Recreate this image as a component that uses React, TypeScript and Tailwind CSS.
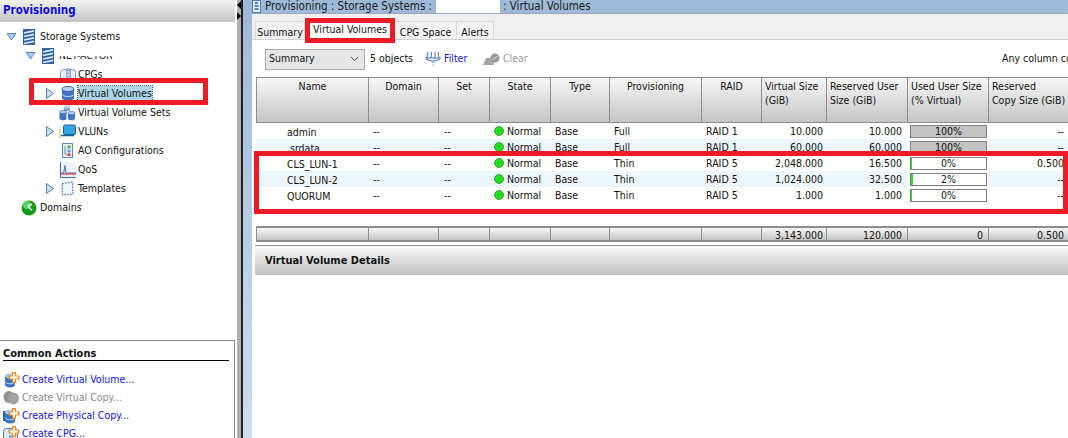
import React from "react";

const Sans = "font-['DejaVu_Sans_Condensed','DejaVu_Sans',sans-serif] [font-stretch:condensed]";

const Expander = ({ open }: { open?: boolean }) => (
  <svg width="13" height="13" viewBox="0 0 13 13" className="shrink-0">
    {open ? (
      <path d="M2 3.500h9L6.500 10z" fill="#a9c9ee" stroke="#5a86bd" />
    ) : (
      <path d="M2.500 1.500v10L9.500 6.500z" fill="#cfe0f5" stroke="#4f7db8" />
    )}
  </svg>
);

const StorageIcon = () => (
  <svg width="12" height="16" viewBox="0 0 12 16" className="shrink-0">
    <rect x="0" y="0" width="12" height="16" fill="#2f62a6" />
    <path d="M1 4 11 1.800M1 7.500 11 5.300M1 11 11 8.800M1 14.500 11 12.300" stroke="#dfeaf7" strokeWidth="1.700" />
  </svg>
);

const VolumeIcon = () => (
  <svg width="14" height="15" viewBox="0 0 14 15" className="shrink-0">
    <path d="M1 3v9c0 1.500 2.700 2.500 6 2.500s6-1 6-2.500V3z" fill="#3f76c4" />
    <ellipse cx="7" cy="3" rx="6" ry="2.500" fill="#b9d4f2" stroke="#2f5f9e" />
    <path d="M1 8c0 1.500 2.700 2.500 6 2.500s6-1 6-2.500" fill="none" stroke="#cfe2f8" />
  </svg>
);

const CpgIcon = () => (
  <svg width="16" height="14" viewBox="0 0 16 14" className="shrink-0">
    <rect x="0.500" y="1.500" width="15" height="12" rx="3" fill="#e6eff9" stroke="#7f9fc8" />
    <rect x="6" y="0.500" width="5" height="13" fill="#8eaad0" />
    <path d="M7 4h3M7 7h3M7 10h3" stroke="#f2f6fb" />
  </svg>
);

const SetsIcon = () => (
  <svg width="17" height="16" viewBox="0 0 17 16" className="shrink-0">
    <path d="M5 1h6v5H5z" fill="#7fa3d6" />
    <ellipse cx="8" cy="1.800" rx="3.500" ry="1.500" fill="#bcd4f0" />
    <path d="M0.500 7v6.500c0 1 1.600 1.800 3.500 1.800s3.500-.8 3.500-1.800V7z" fill="#3f76c4" />
    <ellipse cx="4" cy="7" rx="3.500" ry="1.600" fill="#bcd4f0" stroke="#2f5f9e" strokeWidth=".6" />
    <path d="M9 8v5.500c0 1 1.600 1.800 3.500 1.800s3.500-.8 3.500-1.800V8z" fill="#3f76c4" />
    <ellipse cx="12.500" cy="8" rx="3.500" ry="1.600" fill="#bcd4f0" stroke="#2f5f9e" strokeWidth=".6" />
  </svg>
);

const VlunIcon = () => (
  <svg width="17" height="15" viewBox="0 0 17 15" className="shrink-0">
    <path d="M1 5v10" stroke="#9fce3a" strokeWidth="1.500" strokeDasharray="1.500 1" />
    <rect x="4.500" y="1" width="12" height="9.500" rx="1.500" fill="#35a7e0" stroke="#1d5f95" />
    <path d="M2 11.500h13" stroke="#1d5f95" strokeWidth="1.500" />
  </svg>
);

const AoIcon = () => (
  <svg width="11" height="15" viewBox="0 0 11 15" className="shrink-0">
    <rect x="0.500" y="0.500" width="10" height="14" fill="#e6eff9" stroke="#5f86bb" />
    <rect x="5.500" y="2.500" width="3" height="3" fill="#49b649" />
    <rect x="5.500" y="6.500" width="3" height="3" fill="#6aa0d8" />
    <rect x="5.500" y="10.500" width="3" height="2.500" fill="#d43c3c" />
    <path d="M3 3v8h2" fill="none" stroke="#6a86a8" />
  </svg>
);

const TitleIcon = () => (
  <svg width="9" height="13" viewBox="0 0 9 13" className="shrink-0">
    <rect x="0.500" y="0.500" width="8" height="12" fill="#e6eff9" stroke="#4f7db8" />
    <path d="M3 3h3M2.500 6h4M2.500 9h4" stroke="#2f5f9e" strokeWidth="1.400" />
  </svg>
);

const QosIcon = () => (
  <svg width="16" height="16" viewBox="0 0 16 16" className="shrink-0">
    <rect x="0" y="0" width="16" height="16" fill="#eef3fb" />
    <path d="M0.500 0v15.500H16" fill="none" stroke="#3f6fa8" />
    <path d="M1 11h2.500L5 3.500 6 11h10" fill="#c9d8f2" stroke="#4b78c0" />
    <path d="M1 12h15" stroke="#e03030" strokeWidth="1.200" />
  </svg>
);

const TemplatesIcon = () => (
  <svg width="13" height="15" viewBox="0 0 13 15" className="shrink-0">
    <path d="M1 2.500 11.500 1 12 13 1.500 14z" fill="#eef4fb" stroke="#4b78c0" strokeWidth="1.300" strokeDasharray="1.600 1.400" />
  </svg>
);

const DomainsIcon = () => (
  <svg width="16" height="16" viewBox="0 0 16 16" className="shrink-0">
    <circle cx="8" cy="8" r="7.500" fill="#159a15" />
    <circle cx="6" cy="5" r="4" fill="#5fd45f" />
    <path d="M7 6.500 11 4M7 6.500l4 4" stroke="#eef" strokeWidth="1.500" />
  </svg>
);

const Plus = () => (
  <g>
    <path d="M9 0h4v3.500h3.500v4H13V11H9V7.500H5.500v-4H9z" fill="#f08a1d" />
    <path d="M11 1.500v8M7 5.500h8" stroke="#fff" strokeWidth="1.800" />
  </g>
);

const ActionIcon = ({ kind }: { kind: string }) => (
  <svg width="17" height="16" viewBox="0 0 17 16" className="shrink-0">
    {kind === "gray" ? (
      <g>
        <ellipse cx="6" cy="7" rx="5.500" ry="6" fill="#8f8f8f" />
        <ellipse cx="10.500" cy="8.500" rx="5.500" ry="6" fill="#a3a3a3" />
      </g>
    ) : kind === "cpg" ? (
      <g>
        <rect x="0.500" y="2.500" width="14" height="13" rx="3" fill="#dce9f7" stroke="#4b78c0" />
        <rect x="6" y="9" width="4" height="6" fill="#8eaad0" />
        <Plus />
      </g>
    ) : (
      <g>
        {kind === "copy" && <path d="M0 3h6v10H0z" fill="#2f5f9e" />}
        <path d="M2 4v9c0 1.300 2.200 2.500 5 2.500s5-1.200 5-2.500V4z" fill="#3a74c8" />
        <ellipse cx="7" cy="4" rx="5" ry="2.400" fill="#a9c8ec" />
        <path d="M2 9.500c0 1.300 2.200 2.300 5 2.300s5-1 5-2.300" fill="none" stroke="#bcd6f3" />
        <Plus />
      </g>
    )}
  </svg>
);

const tree = [
  { label: "CPGs", icon: <CpgIcon /> },
  { label: "Virtual Volumes", arrow: true, icon: <VolumeIcon />, selected: true },
  { label: "Virtual Volume Sets", icon: <SetsIcon /> },
  { label: "VLUNs", arrow: true, icon: <VlunIcon /> },
  { label: "AO Configurations", icon: <AoIcon /> },
  { label: "QoS", icon: <QosIcon /> },
  { label: "Templates", arrow: true, icon: <TemplatesIcon /> },
];

const columns = [
  { name: "Name", w: "w-[112px]", pr: "pr-[3px]" },
  { name: "Domain", w: "w-[70px]", pr: "pr-[3px]" },
  { name: "Set", w: "w-[51px]", pr: "pr-[3px]" },
  { name: "State", w: "w-[61px]", pr: "pr-[3px]" },
  { name: "Type", w: "w-[59px]", pr: "pr-[3px]" },
  { name: "Provisioning", w: "w-[92px]", pr: "pr-[3px]" },
  { name: "RAID", w: "w-[60px]", pr: "pr-[3px]" },
  { name: "Virtual Size (GiB)", w: "w-[65px]", pr: "pr-[3px]", left: true },
  { name: "Reserved User Size (GiB)", w: "w-[81px]", pr: "pr-[5px]", left: true },
  { name: "Used User Size (% Virtual)", w: "w-[81px]", pr: "pr-[5px]", left: true },
  { name: "Reserved Copy Size (GiB)", w: "w-[80px]", pr: "pr-[4px]", left: true },
];

const rows = [
  { name: "admin", prov: "Full", raid: "RAID 1", size: "10.000", res: "10.000", used: 100, copy: "--" },
  { name: ".srdata", prov: "Full", raid: "RAID 1", size: "60.000", res: "60.000", used: 100, copy: "--" },
  { name: "CLS_LUN-1", prov: "Thin", raid: "RAID 5", size: "2,048.000", res: "16.500", used: 0, copy: "0.500" },
  { name: "CLS_LUN-2", prov: "Thin", raid: "RAID 5", size: "1,024.000", res: "32.500", used: 2, copy: "--" },
  { name: "QUORUM", prov: "Thin", raid: "RAID 5", size: "1.000", res: "1.000", used: 0, copy: "--" },
];

const UsedBar = ({ used }: { used: number }) => (
  <div className={"relative h-[13px] w-[77px] border border-[#808080] text-center leading-[11px] " + (used === 100 ? "bg-[#c3c3c3]" : "bg-white")}>
    {used === 2 && <div className="absolute left-0 top-0 h-full w-[2px] bg-[#22e022]" />}
    {used === 0 && <div className="absolute left-0 top-0 h-full w-[1px] bg-[#22e022]" />}
    <span className="relative">{used}%</span>
  </div>
);

const App = () => {
  return (
    <div className={Sans + " relative flex h-[438px] w-[1068px] overflow-hidden bg-white text-[10.5px] text-[#111]"}>
      {/* left navigation */}
      <div className="flex w-[235px] shrink-0 flex-col bg-white">
        <div className="flex h-[22px] shrink-0 items-center bg-gradient-to-b from-[#f2f2f2] to-[#c4c4c4] pl-[3px] text-[11.5px] font-bold text-[#0a0ae6]">
          Provisioning
        </div>
        <div className="flex-1 pt-[5px]">
          <div className="flex h-[19px] items-center pl-[5px]">
            <Expander open />
            <div className="ml-[5px]"><StorageIcon /></div>
            <span className="ml-[5px]">Storage Systems</span>
          </div>
          <div className="flex h-[19px] items-center pl-[24px]">
            <Expander open />
            <div className="ml-[5px]"><StorageIcon /></div>
            <span className="ml-[5px] [clip-path:inset(55%_0_0_0)]">NET-ACTOR</span>
          </div>
          {tree.map((item) => (
            <div key={item.label} className={"flex h-[19px] items-center " + (item.arrow ? "pl-[44px]" : "pl-[59px]")}>
              {item.arrow && (
                <div className="mr-[2px]">
                  <Expander />
                </div>
              )}
              <div className="flex w-[17px] shrink-0 justify-center">{item.icon}</div>
              <span className={item.selected ? "ml-[2px] bg-[#add6e6] outline-1 outline-dotted outline-[#555]" : "ml-[2px]"}>
                {item.label}
              </span>
            </div>
          ))}
          <div className="flex h-[19px] items-center gap-[3px] pl-[21px]">
            <DomainsIcon />
            <span>Domains</span>
          </div>
        </div>
        <div className="h-[98px] shrink-0 border-r border-t border-[#8a8a96] pl-[3px] pr-[5px] pt-[6px]">
          <div className="h-[14px] border-b border-black text-[11px] font-bold leading-[14px] text-[#111]">Common Actions</div>
          <div className="pt-[10px] text-[#1414e6]">
            <div className="flex h-[18px] items-center gap-[2px]"><ActionIcon kind="vol" />Create Virtual Volume...</div>
            <div className="flex h-[18px] items-center gap-[2px] text-[#8a8a8a]"><ActionIcon kind="gray" />Create Virtual Copy...</div>
            <div className="flex h-[18px] items-center gap-[2px]"><ActionIcon kind="copy" />Create Physical Copy...</div>
            <div className="flex h-[18px] items-center gap-[2px]"><ActionIcon kind="cpg" />Create CPG...</div>
          </div>
        </div>
      </div>

      {/* splitter */}
      <div className="w-[2px] shrink-0 bg-white" />
      <div className="flex w-[6px] shrink-0 flex-col items-start gap-[3px] border-r-2 border-[#222] bg-[#b0b0b0] pt-[1px]">
        <div className="h-0 w-0 border-y-[4px] border-r-[4px] border-y-transparent border-r-black" />
        <div className="h-0 w-0 border-y-[4px] border-l-[4px] border-y-transparent border-l-black" />
      </div>

      {/* main panel */}
      <div className="flex min-w-0 flex-1 flex-col bg-gradient-to-b from-[#9db9d8] to-[#cfdeee] pl-[9px]">
        <div className="flex h-[13px] shrink-0 items-center text-[#1a1a1a]">
          <TitleIcon />
          <span className="ml-[4px] w-[171px] shrink-0 whitespace-nowrap text-[11.5px]">Provisioning : Storage Systems :</span>
          <span className="h-[13px] w-[64px] shrink-0 bg-white" />
          <span className="ml-[3px] whitespace-nowrap text-[11.5px]">: Virtual Volumes</span>
        </div>
        <div className="flex flex-1 flex-col bg-white">
          <div className="flex h-[27px] shrink-0 items-end border-b border-[#d0d0d0] border-t-[1px] border-t-[#9ab] bg-[#efefef] pl-[3px]">
            <div className="flex h-[18px] w-[50px] items-center justify-center border border-b-0 border-[#d8d8d8] bg-[#f2f2f2] pt-[4px]">Summary</div>
            <div className="flex h-[22px] w-[90px] items-center justify-center bg-white pt-[3px]">Virtual Volumes</div>
            <div className="flex h-[18px] w-[62px] items-center justify-center border-r border-t border-[#d8d8d8] bg-[#f2f2f2] pt-[4px]">CPG Space</div>
            <div className="flex h-[18px] w-[37px] items-center justify-center border-r border-t border-[#d8d8d8] bg-[#f2f2f2] pt-[4px]">Alerts</div>
          </div>
          <div className="flex h-[37px] shrink-0 items-center pl-[13px] pt-[1px]">
            <div className="flex h-[21px] w-[100px] shrink-0 items-center justify-between border border-[#acacac] bg-[#e5e5e5] pl-[3px] pr-[5px]">
              Summary
              <svg width="9" height="6" viewBox="0 0 9 6"><path d="M1 1l3.500 3.500L8 1" fill="none" stroke="#555" /></svg>
            </div>
            <span className="ml-[5px] w-[54px] shrink-0 whitespace-nowrap">5 objects</span>
            <svg width="20" height="16" viewBox="0 0 20 16" className="shrink-0">
              <path d="M1 7h16M3 7l1-6M7 7l.5-6M11 7V1M15 7l-1-6M2 8l5 2h4l5-2M9 11v1M9 13.500v1" fill="none" stroke="#3c6cc0" />
            </svg>
            <span className="w-[39px] shrink-0 text-[#1414e6]">Filter</span>
            <svg width="17" height="13" viewBox="0 0 17 13" className="shrink-0">
              <path d="M0 12 3 5h8v7z" fill="#a8a8a8" />
              <circle cx="12" cy="5" r="4.500" fill="#989898" />
              <path d="M9 7l6-4" stroke="#ddd" />
            </svg>
            <span className="ml-[3px] text-[#9a9a9a]">Clear</span>
            <span className="ml-[auto] w-[66px] shrink-0 overflow-hidden whitespace-nowrap">Any column co</span>
          </div>

          {/* volume table */}
          <div className="flex-1 overflow-hidden pl-[4px]">
            <div className="flex h-[46px] w-[812px] border-y border-l border-[#8c8c8c] bg-gradient-to-b from-[#f6f6f6] to-[#c6c6c6]">
              {columns.map((c) => (
                <div key={c.name} className={c.w + " shrink-0 border-r border-[#8c8c8c] pt-[1px] leading-[14px] " + (c.left ? "pl-[3px] text-left" : "text-center")}>
                  {c.name === "Reserved Copy Size (GiB)" ? (
                    <>
                      Reserved
                      <br />
                      <span className="whitespace-nowrap">Copy Size (GiB)</span>
                    </>
                  ) : (
                    c.name
                  )}
                </div>
              ))}
            </div>
            <div className="h-[103px] w-[812px]">
              {rows.map((r, i) => (
                <div key={r.name} className={"flex h-[16px] items-center leading-[16px] " + (i % 2 === 1 ? "bg-[#eef6fd]" : "bg-white")}>
                  <div className="w-[112px] shrink-0 pl-[31px] pt-[2px]">{r.name}</div>
                  <div className="w-[70px] shrink-0 pl-[5px]">--</div>
                  <div className="w-[51px] shrink-0 pl-[6px]">--</div>
                  <div className="flex w-[61px] shrink-0 items-center gap-[3px] pl-[5px]">
                    <span className="h-[10px] w-[10px] rounded-full border border-[#4a9a4a] bg-[#1de01d]" />
                    Normal
                  </div>
                  <div className="w-[59px] shrink-0 pl-[5px]">Base</div>
                  <div className="w-[92px] shrink-0 pl-[5px]">{r.prov}</div>
                  <div className="w-[60px] shrink-0 pl-[5px]">{r.raid}</div>
                  <div className="w-[65px] shrink-0 text-right pr-[3px]">{r.size}</div>
                  <div className="w-[81px] shrink-0 text-right pr-[5px]">{r.res}</div>
                  <div className="flex w-[81px] shrink-0 justify-start bg-white pl-[3px] pt-[1px]">
                    <UsedBar used={r.used} />
                  </div>
                  <div className="w-[80px] shrink-0 pr-[4px] text-right">{r.copy}</div>
                </div>
              ))}
            </div>
            <div className="flex h-[16px] w-[812px] border-y-2 border-l border-[#8c8c8c] bg-gradient-to-b from-[#f6f6f6] to-[#c6c6c6] leading-[14px]">
              {["", "", "", "", "", "", "", "3,143.000", "120.000", "0", "0.500"].map((v, i) => (
                <div key={i} className={columns[i].w + " " + columns[i].pr + " h-[12px] shrink-0 border-r border-[#8c8c8c] text-right"}>
                  {v}
                </div>
              ))}
            </div>
            <div className="-ml-[1px] mt-[3px] flex h-[30px] items-center border-t border-[#8c8c8c] bg-gradient-to-b from-[#fafafa] to-[#c2c2c2] pl-[10px] pt-[2px] text-[11px] font-bold">
              Virtual Volume Details
            </div>
          </div>
        </div>
      </div>

      {/* red annotation boxes */}
      <div className="absolute left-[29px] top-[78px] h-[27px] w-[179px] border-[5px] border-[#ed1c24]" />
      <div className="absolute left-[305px] top-[18px] h-[25px] w-[90px] border-[5px] border-[#ed1c24]" />
      <div className="absolute left-[254px] top-[151px] h-[63px] w-[814px] border-[5px] border-[#ed1c24]" />
    </div>
  );
};

export default App;
